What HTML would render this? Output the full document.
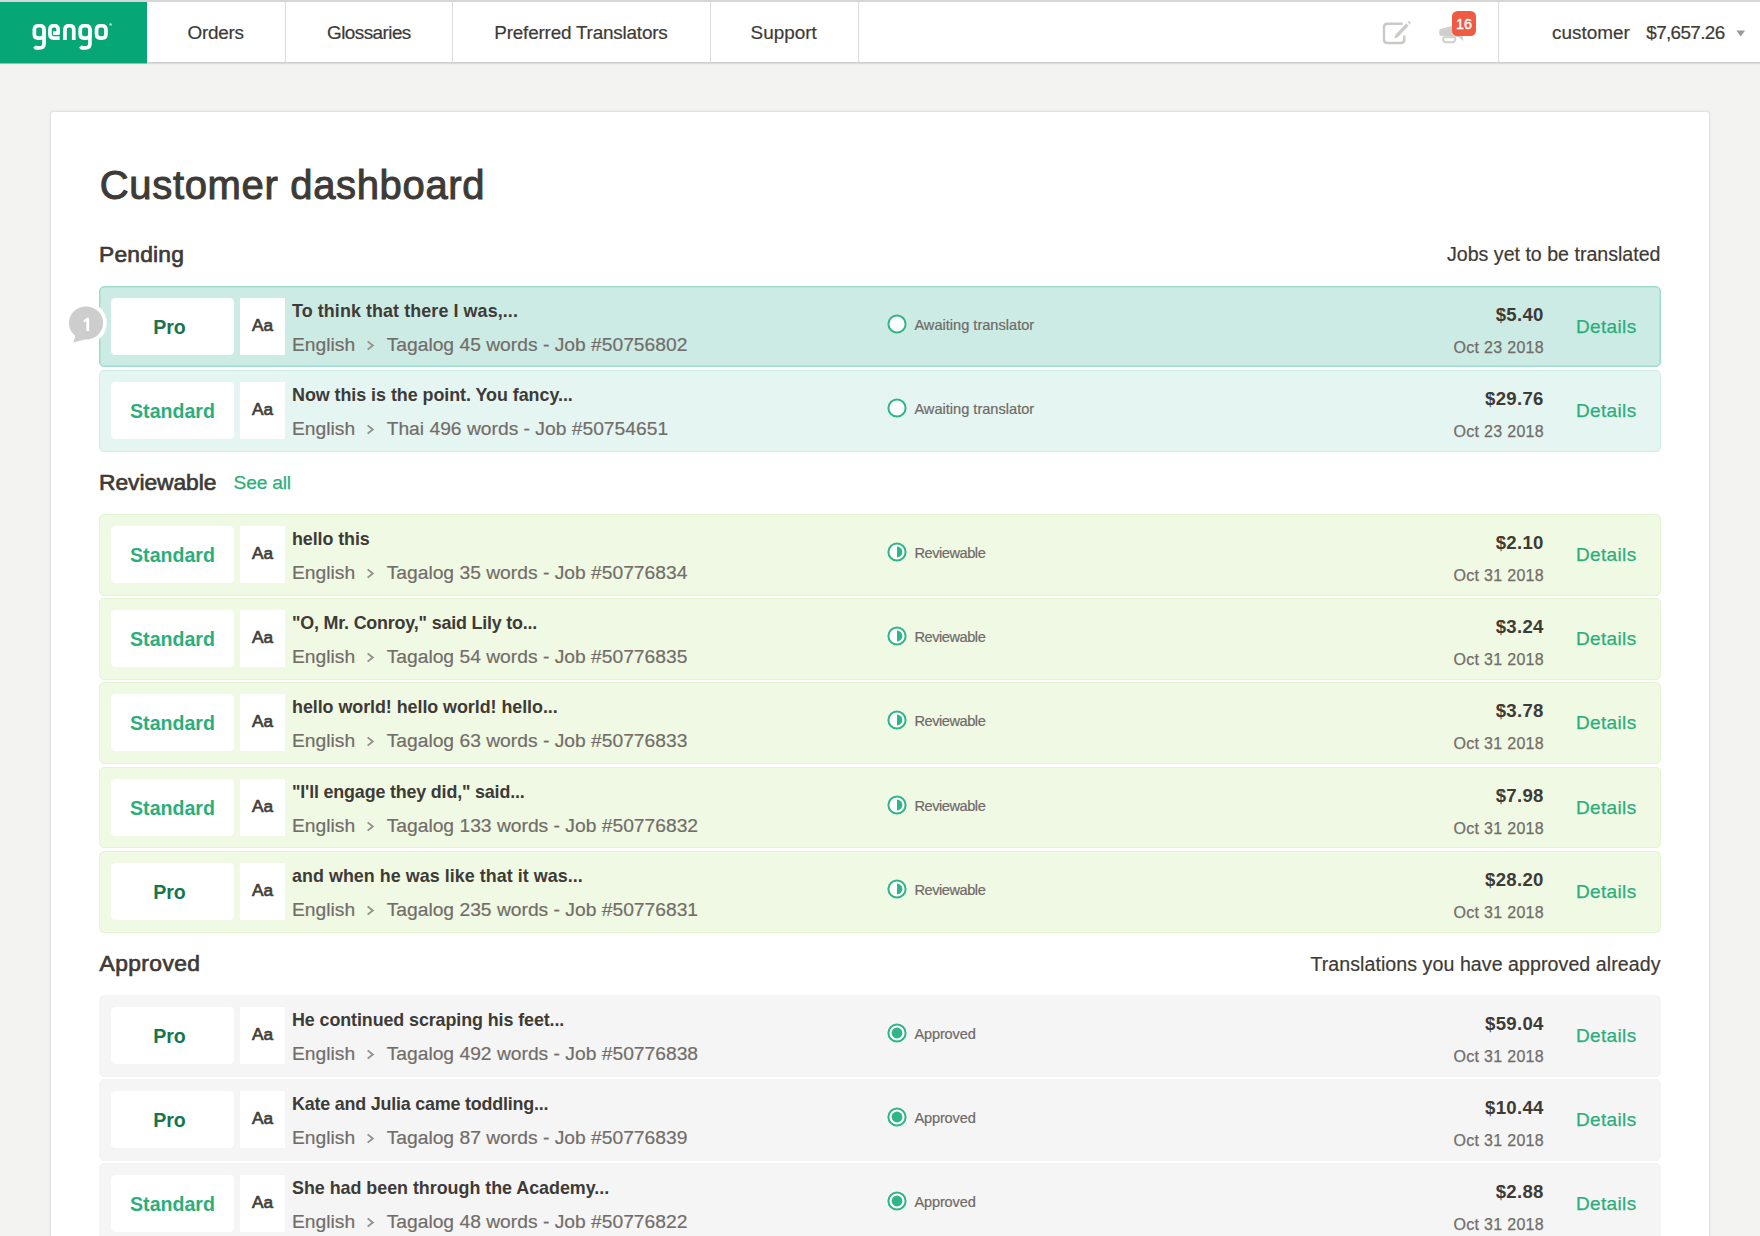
<!DOCTYPE html>
<html lang="en"><head><meta charset="utf-8"><title>Customer dashboard</title>
<style>
*{box-sizing:border-box;margin:0;padding:0}
html,body{width:1760px;height:1236px;overflow:hidden}
body{background:#f3f3f1;font-family:"Liberation Sans",sans-serif;color:#3e3a36;position:relative}
.topline{position:absolute;left:0;top:0;width:1760px;height:2px;background:#d6d6d6}
.nav{position:absolute;left:0;top:2px;width:1760px;height:61px;background:#fff;border-bottom:1px solid #cecece;box-shadow:0 1px 0 rgba(0,0,0,.07),0 2px 1px rgba(0,0,0,.025)}
.logo{position:absolute;left:0;top:2px;width:147px;height:61px;background:#07a676;overflow:hidden;box-shadow:0 1px 0 rgba(7,166,118,.4)}
.sep{position:absolute;top:2px;width:1px;height:60px;background:#dcdcdc}
.ni{-webkit-text-stroke:0.2px #3e3a36;position:absolute;top:3.2px;height:60.4px;line-height:60.4px;font-size:18.9px;color:#3e3a36;white-space:nowrap}
.hic{position:absolute}
.badge{position:absolute;left:1451.8px;top:11.2px;width:24.6px;height:24.8px;border-radius:5.5px;background:#ee5a42;color:#fff;font-size:14.4px;line-height:27.6px;text-align:center;-webkit-text-stroke:0.4px #fff}
.card{position:absolute;left:51px;top:112px;width:1658px;height:1200px;background:#fff;border-radius:2px;box-shadow:0 0 0 1px #e3e3e1,0 0 3px 1px rgba(0,0,0,.07)}
.h1{position:absolute;left:99.8px;top:160.3px;font-size:40px;line-height:50px;color:#3e3a36;white-space:nowrap;letter-spacing:0.66px;-webkit-text-stroke:1px #3e3a36}
.h2{position:absolute;left:99px;font-size:22.8px;line-height:28px;white-space:nowrap;letter-spacing:0.2px;-webkit-text-stroke:0.7px #3e3a36}
.hr{-webkit-text-stroke:0.2px #3e3a36;position:absolute;right:99.5px;font-size:19.6px;line-height:28px;white-space:nowrap}
.seeall{-webkit-text-stroke:0.25px #2bae7c;position:absolute;left:233.6px;letter-spacing:-0.2px;font-size:19.2px;line-height:28px;color:#2bae7c;white-space:nowrap}
.row{position:absolute;left:99px;width:1562px;height:81px;border-radius:5px;border:1px solid}
.row.pend{background:#e5f5f1;border-color:#cdece4}
.row.pend.act{background:#cbebe4;border-color:#a0dccd;box-shadow:inset 0 0 0 1px rgba(160,220,205,.5)}
.row.rev{background:#f0f9e4;border-color:#e3f4d0}
.row.app{background:#f5f5f5;border-color:#f3f3f3}
.row>*{position:absolute}
.tier{left:11px;top:11px;width:123px;height:57px;background:#fff;border-radius:4.5px;text-align:center;line-height:58.5px;font-weight:bold;font-size:19.6px}
.tier.pro{color:#17744f;padding-right:6px}
.tier.std{color:#2bae7c}
.aa{left:140px;top:11px;width:45px;height:57px;background:#fff;text-align:center;line-height:54.4px;font-size:17.2px;color:#433f3b;-webkit-text-stroke:0.7px #433f3b}
.ttl{left:192px;top:12.2px;font-size:17.9px;font-weight:bold;line-height:24px;white-space:nowrap;color:#3e3a36;letter-spacing:0.09px}
.sub{-webkit-text-stroke:0.2px #726d69;left:192px;top:44.8px;font-size:19.25px;line-height:26px;white-space:nowrap;color:#726d69}
.sub .chev{position:relative;margin:0 11.5px 0 11px;top:0.5px}
.ic{left:785.6px;top:26.4px}
.st{-webkit-text-stroke:0.2px #6f6a67;left:814.4px;top:27.6px;font-size:14.6px;line-height:20px;color:#6f6a67;white-space:nowrap}
.st-rev{letter-spacing:-0.45px}
.st-app{letter-spacing:-0.15px}
.pr{right:116.3px;top:15.8px;font-size:18.6px;font-weight:bold;line-height:24px;white-space:nowrap;letter-spacing:0.3px}
.dt{-webkit-text-stroke:0.25px #726d69;right:116.3px;top:50.4px;font-size:16px;line-height:22px;color:#726d69;white-space:nowrap;letter-spacing:0.3px;margin-right:-0.3px}
.det{-webkit-text-stroke:0.25px #2bae7c;left:1476px;top:27px;font-size:19px;line-height:26px;color:#2bae7c;white-space:nowrap;letter-spacing:0.35px}
.bub{left:-35.9px;top:15px}
.bubn{left:-20.8px;top:26.4px;width:14px;text-align:center;color:#fff;font-size:18.6px;line-height:22px;-webkit-text-stroke:0.6px #fff}

</style></head>
<body>
<div class="nav"></div>
<div class="topline"></div>
<div class="logo">
<svg width="147" height="62" viewBox="0 2 147 62" style="position:absolute;left:0;top:0">
<g fill="none" stroke="#fff" stroke-width="3.7" stroke-linejoin="round">
<path d="M34.35 29.6 Q34.35 25.75 38.2 25.75 H40.2 Q44.05 25.75 44.05 29.6 V34.2 Q44.05 38.05 40.2 38.05 H38.2 Q34.35 38.05 34.35 34.2 Z"/>
<path d="M44.05 29 V43.4 Q44.05 47.8 39.6 47.8 H35.8 L34.6 46.4"/>
<path d="M53 33.2 H58.15 V29.6 Q58.15 25.75 54.6 25.75 H53.5 Q49.95 25.75 49.95 29.6 V34.2 Q49.95 38.05 53.8 38.05 H59.6"/>
<path d="M64.95 39.9 V29.6 Q64.95 25.75 68.6 25.75 H70.1 Q73.75 25.75 73.75 29.6 V39.9"/>
<path d="M80.25 29.6 Q80.25 25.75 84.1 25.75 H86.1 Q89.95 25.75 89.95 29.6 V34.2 Q89.95 38.05 86.1 38.05 H84.1 Q80.25 38.05 80.25 34.2 Z"/>
<path d="M89.95 29 V43.4 Q89.95 47.8 85.5 47.8 H81.7 L80.5 46.4"/>
<path d="M96.55 29.6 Q96.55 25.75 100.4 25.75 H102.1 Q105.95 25.75 105.95 29.6 V34.2 Q105.95 38.05 102.1 38.05 H100.4 Q96.55 38.05 96.55 34.2 Z"/>
</g>
<circle cx="110.6" cy="24.4" r="1.2" fill="#bfe9db"/>
</svg>
</div>
<div class="sep" style="left:285px"></div>
<div class="sep" style="left:452px"></div>
<div class="sep" style="left:710px"></div>
<div class="sep" style="left:858px"></div>
<div class="sep" style="left:1498px"></div>
<div class="ni" style="left:187.6px;letter-spacing:-0.3px">Orders</div>
<div class="ni" style="left:327px;letter-spacing:-0.55px">Glossaries</div>
<div class="ni" style="left:494.3px;letter-spacing:-0.2px">Preferred Translators</div>
<div class="ni" style="left:750.6px">Support</div>
<div class="ni" style="left:1552px">customer</div>
<div class="ni" style="left:1646.3px;letter-spacing:-0.65px">$7,657.26</div>
<svg class="hic" style="left:1378px;top:16px" width="36" height="34" viewBox="1378 16 36 34">
<path d="M1402.6 23.7 H1387.5 Q1384 23.7 1384 27.2 V39.5 Q1384 43 1387.5 43 H1400.8 Q1404.3 43 1404.3 39.5 V35.4" fill="none" stroke="#c9c9c7" stroke-width="2.4"/>
<path d="M1394.2 38.4 L1395.6 34.6 L1406.2 23.4 L1408.6 25.7 L1398 36.9 Z" fill="#c9c9c7"/>
<path d="M1407.4 22.2 L1408.5 21.1 Q1409.4 20.6 1410.2 21.4 L1410.6 21.9 Q1411.2 22.8 1410.5 23.6 L1409.6 24.5 Z" fill="#d4d4d2"/>
</svg>
<svg class="hic" style="left:1436px;top:22px" width="30" height="24" viewBox="1436 22 30 24">
<path d="M1439.3 30.4 Q1439.3 29.4 1440.4 29.1 L1451 26.2 L1456 26.2 L1463 37 L1463.2 41.2 L1459.5 37.6 L1456 36.7 L1440.6 35.7 Q1439.3 35.5 1439.3 34.2 Z" fill="#cfcfcd"/>
<path d="M1444.5 37.2 H1453.8 Q1455.6 37.2 1455.4 39 L1455 40.4 Q1454.6 42.2 1452.8 42.2 H1445.3 Q1443.5 42.2 1443.3 40.4 L1443.1 39 Q1442.9 37.2 1444.5 37.2 Z" fill="#fff" stroke="#cfcfcd" stroke-width="1.9"/>
</svg>
<div class="badge">16</div>
<svg class="hic" style="left:1735px;top:29px" width="12" height="9" viewBox="0 0 12 9"><path d="M1.3 1.6 H10.1 L5.7 7.4 Z" fill="#9b9b99"/></svg>

<div class="card"></div>
<div class="h1">Customer dashboard</div>
<div class="h2" style="top:239.9px">Pending</div>
<div class="hr" style="top:240px">Jobs yet to be translated</div>
<div class="h2" style="top:467.8px;letter-spacing:-0.05px">Reviewable</div>
<div class="seeall" style="top:468.5px">See all</div>
<div class="h2" style="top:948.8px;left:99.6px;letter-spacing:0.4px">Approved</div>
<div class="hr" style="top:949.5px;letter-spacing:0.06px">Translations you have approved already</div>
<div class="row pend act" style="top:286px;height:81px"><svg class="bub" width="44" height="46" viewBox="0 0 44 46"><circle cx="22" cy="21" r="20.8" fill="#fff"/><path d="M11.5 33.5 L9.2 40.6 L21 37.6 Z" fill="#cdcdcd"/><ellipse cx="22" cy="21" rx="17.1" ry="16.5" fill="#cdcdcd"/><path d="M22.3 29 V18.9 L20.3 20.6 L19 19.1 L22.8 15.7 H25.1 V29 Z" fill="#fff"/></svg><div class="tier pro"><span>Pro</span></div><div class="aa"><span>Aa</span></div><div class="ttl" style="letter-spacing:0.090px">To think that there I was,...</div><div class="sub"><span class="l1">English</span><svg class="chev" width="9" height="11" viewBox="0 0 9 11"><path d="M1.6 1.4 L6.8 5.5 L1.6 9.6" fill="none" stroke="#938e8a" stroke-width="1.8"/></svg><span class="l2">Tagalog 45 words - Job #50756802</span></div><svg class="ic" width="22" height="22" viewBox="0 0 22 22"><circle cx="11" cy="11" r="8.6" fill="#fff" stroke="#2fb587" stroke-width="2"/></svg><div class="st st-awa">Awaiting translator</div><div class="pr">$5.40</div><div class="dt">Oct 23 2018</div><div class="det">Details</div></div>
<div class="row pend" style="top:370px;height:82px"><div class="tier std"><span>Standard</span></div><div class="aa"><span>Aa</span></div><div class="ttl" style="letter-spacing:-0.044px">Now this is the point. You fancy...</div><div class="sub"><span class="l1">English</span><svg class="chev" width="9" height="11" viewBox="0 0 9 11"><path d="M1.6 1.4 L6.8 5.5 L1.6 9.6" fill="none" stroke="#938e8a" stroke-width="1.8"/></svg><span class="l2">Thai 496 words - Job #50754651</span></div><svg class="ic" width="22" height="22" viewBox="0 0 22 22"><circle cx="11" cy="11" r="8.6" fill="#fff" stroke="#2fb587" stroke-width="2"/></svg><div class="st st-awa">Awaiting translator</div><div class="pr">$29.76</div><div class="dt">Oct 23 2018</div><div class="det">Details</div></div>
<div class="row rev" style="top:514px;height:82px"><div class="tier std"><span>Standard</span></div><div class="aa"><span>Aa</span></div><div class="ttl" style="letter-spacing:-0.085px">hello this</div><div class="sub"><span class="l1">English</span><svg class="chev" width="9" height="11" viewBox="0 0 9 11"><path d="M1.6 1.4 L6.8 5.5 L1.6 9.6" fill="none" stroke="#938e8a" stroke-width="1.8"/></svg><span class="l2">Tagalog 35 words - Job #50776834</span></div><svg class="ic" width="22" height="22" viewBox="0 0 22 22"><circle cx="11" cy="11" r="8.6" fill="#fff" stroke="#2fb587" stroke-width="2"/><path d="M11 5.6 A5.4 5.4 0 0 1 11 16.4 Z" fill="#2fb587"/></svg><div class="st st-rev">Reviewable</div><div class="pr">$2.10</div><div class="dt">Oct 31 2018</div><div class="det">Details</div></div>
<div class="row rev" style="top:598px;height:82px"><div class="tier std"><span>Standard</span></div><div class="aa"><span>Aa</span></div><div class="ttl" style="letter-spacing:-0.190px">&quot;O, Mr. Conroy,&quot; said Lily to...</div><div class="sub"><span class="l1">English</span><svg class="chev" width="9" height="11" viewBox="0 0 9 11"><path d="M1.6 1.4 L6.8 5.5 L1.6 9.6" fill="none" stroke="#938e8a" stroke-width="1.8"/></svg><span class="l2">Tagalog 54 words - Job #50776835</span></div><svg class="ic" width="22" height="22" viewBox="0 0 22 22"><circle cx="11" cy="11" r="8.6" fill="#fff" stroke="#2fb587" stroke-width="2"/><path d="M11 5.6 A5.4 5.4 0 0 1 11 16.4 Z" fill="#2fb587"/></svg><div class="st st-rev">Reviewable</div><div class="pr">$3.24</div><div class="dt">Oct 31 2018</div><div class="det">Details</div></div>
<div class="row rev" style="top:682px;height:82px"><div class="tier std"><span>Standard</span></div><div class="aa"><span>Aa</span></div><div class="ttl" style="letter-spacing:-0.050px">hello world! hello world! hello...</div><div class="sub"><span class="l1">English</span><svg class="chev" width="9" height="11" viewBox="0 0 9 11"><path d="M1.6 1.4 L6.8 5.5 L1.6 9.6" fill="none" stroke="#938e8a" stroke-width="1.8"/></svg><span class="l2">Tagalog 63 words - Job #50776833</span></div><svg class="ic" width="22" height="22" viewBox="0 0 22 22"><circle cx="11" cy="11" r="8.6" fill="#fff" stroke="#2fb587" stroke-width="2"/><path d="M11 5.6 A5.4 5.4 0 0 1 11 16.4 Z" fill="#2fb587"/></svg><div class="st st-rev">Reviewable</div><div class="pr">$3.78</div><div class="dt">Oct 31 2018</div><div class="det">Details</div></div>
<div class="row rev" style="top:767px;height:81px"><div class="tier std"><span>Standard</span></div><div class="aa"><span>Aa</span></div><div class="ttl" style="letter-spacing:-0.175px">&quot;I'll engage they did,&quot; said...</div><div class="sub"><span class="l1">English</span><svg class="chev" width="9" height="11" viewBox="0 0 9 11"><path d="M1.6 1.4 L6.8 5.5 L1.6 9.6" fill="none" stroke="#938e8a" stroke-width="1.8"/></svg><span class="l2">Tagalog 133 words - Job #50776832</span></div><svg class="ic" width="22" height="22" viewBox="0 0 22 22"><circle cx="11" cy="11" r="8.6" fill="#fff" stroke="#2fb587" stroke-width="2"/><path d="M11 5.6 A5.4 5.4 0 0 1 11 16.4 Z" fill="#2fb587"/></svg><div class="st st-rev">Reviewable</div><div class="pr">$7.98</div><div class="dt">Oct 31 2018</div><div class="det">Details</div></div>
<div class="row rev" style="top:851px;height:82px"><div class="tier pro"><span>Pro</span></div><div class="aa"><span>Aa</span></div><div class="ttl" style="letter-spacing:0.040px">and when he was like that it was...</div><div class="sub"><span class="l1">English</span><svg class="chev" width="9" height="11" viewBox="0 0 9 11"><path d="M1.6 1.4 L6.8 5.5 L1.6 9.6" fill="none" stroke="#938e8a" stroke-width="1.8"/></svg><span class="l2">Tagalog 235 words - Job #50776831</span></div><svg class="ic" width="22" height="22" viewBox="0 0 22 22"><circle cx="11" cy="11" r="8.6" fill="#fff" stroke="#2fb587" stroke-width="2"/><path d="M11 5.6 A5.4 5.4 0 0 1 11 16.4 Z" fill="#2fb587"/></svg><div class="st st-rev">Reviewable</div><div class="pr">$28.20</div><div class="dt">Oct 31 2018</div><div class="det">Details</div></div>
<div class="row app" style="top:995px;height:82px"><div class="tier pro"><span>Pro</span></div><div class="aa"><span>Aa</span></div><div class="ttl" style="letter-spacing:-0.095px">He continued scraping his feet...</div><div class="sub"><span class="l1">English</span><svg class="chev" width="9" height="11" viewBox="0 0 9 11"><path d="M1.6 1.4 L6.8 5.5 L1.6 9.6" fill="none" stroke="#938e8a" stroke-width="1.8"/></svg><span class="l2">Tagalog 492 words - Job #50776838</span></div><svg class="ic" width="22" height="22" viewBox="0 0 22 22"><circle cx="11" cy="11" r="8.6" fill="#fff" stroke="#2fb587" stroke-width="2"/><circle cx="11" cy="11" r="5.4" fill="#2fb587"/></svg><div class="st st-app">Approved</div><div class="pr">$59.04</div><div class="dt">Oct 31 2018</div><div class="det">Details</div></div>
<div class="row app" style="top:1079px;height:82px"><div class="tier pro"><span>Pro</span></div><div class="aa"><span>Aa</span></div><div class="ttl" style="letter-spacing:-0.197px">Kate and Julia came toddling...</div><div class="sub"><span class="l1">English</span><svg class="chev" width="9" height="11" viewBox="0 0 9 11"><path d="M1.6 1.4 L6.8 5.5 L1.6 9.6" fill="none" stroke="#938e8a" stroke-width="1.8"/></svg><span class="l2">Tagalog 87 words - Job #50776839</span></div><svg class="ic" width="22" height="22" viewBox="0 0 22 22"><circle cx="11" cy="11" r="8.6" fill="#fff" stroke="#2fb587" stroke-width="2"/><circle cx="11" cy="11" r="5.4" fill="#2fb587"/></svg><div class="st st-app">Approved</div><div class="pr">$10.44</div><div class="dt">Oct 31 2018</div><div class="det">Details</div></div>
<div class="row app" style="top:1163px;height:82px"><div class="tier std"><span>Standard</span></div><div class="aa"><span>Aa</span></div><div class="ttl" style="letter-spacing:-0.027px">She had been through the Academy...</div><div class="sub"><span class="l1">English</span><svg class="chev" width="9" height="11" viewBox="0 0 9 11"><path d="M1.6 1.4 L6.8 5.5 L1.6 9.6" fill="none" stroke="#938e8a" stroke-width="1.8"/></svg><span class="l2">Tagalog 48 words - Job #50776822</span></div><svg class="ic" width="22" height="22" viewBox="0 0 22 22"><circle cx="11" cy="11" r="8.6" fill="#fff" stroke="#2fb587" stroke-width="2"/><circle cx="11" cy="11" r="5.4" fill="#2fb587"/></svg><div class="st st-app">Approved</div><div class="pr">$2.88</div><div class="dt">Oct 31 2018</div><div class="det">Details</div></div>

</body></html>
